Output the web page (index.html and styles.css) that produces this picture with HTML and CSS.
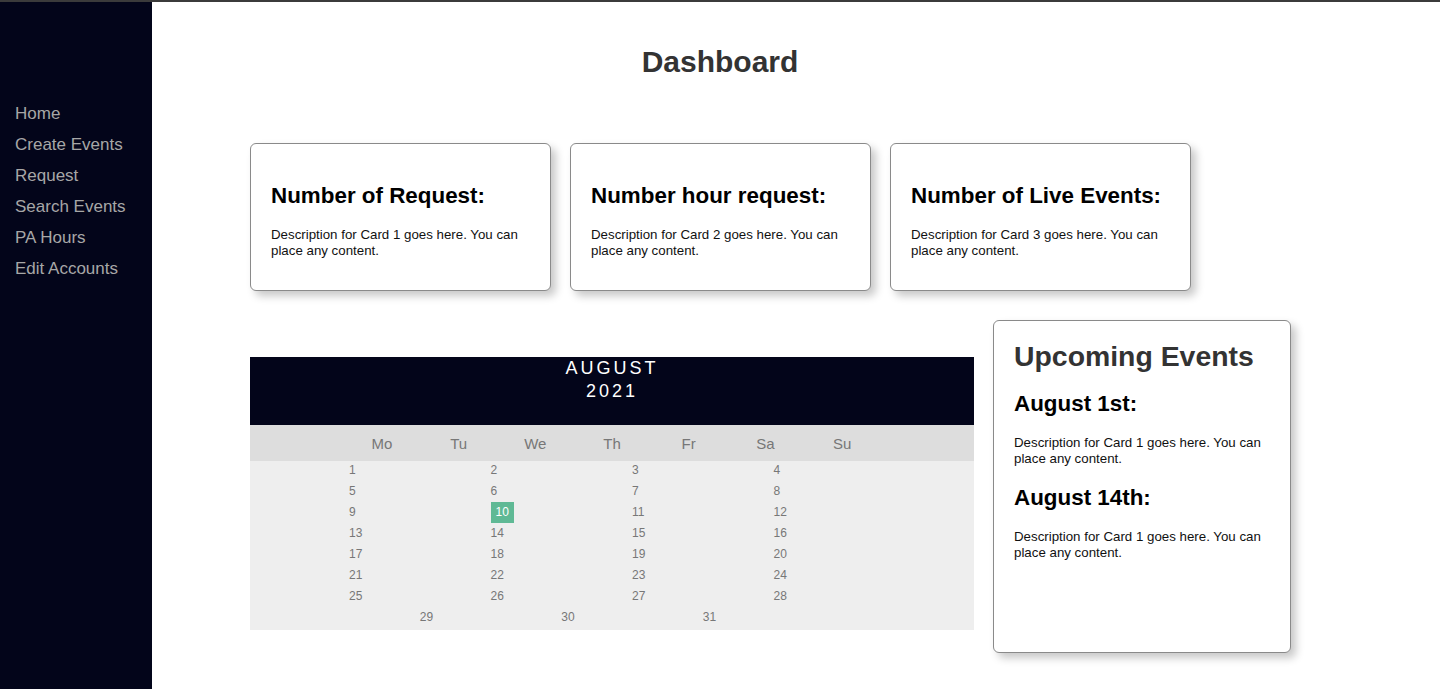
FILE: index.html
```html
<!DOCTYPE html>
<html lang="en">
<head>
<meta charset="utf-8">
<title>Dashboard</title>
<link rel="stylesheet" href="styles.css">
</head>
<body>
<div class="layout">
  <aside class="sidebar">
    <nav class="nav">
      <a class="nav-link" href="#">Home</a>
      <a class="nav-link" href="#">Create Events</a>
      <a class="nav-link" href="#">Request</a>
      <a class="nav-link" href="#">Search Events</a>
      <a class="nav-link" href="#">PA Hours</a>
      <a class="nav-link" href="#">Edit Accounts</a>
    </nav>
  </aside>
  <main class="main">
    <h1 class="page-title">Dashboard</h1>
    <section class="stats">
      <div class="card">
        <h3 class="card-title">Number of Request:</h3>
        <p class="card-text">Description for Card 1 goes here. You can place any content.</p>
      </div>
      <div class="card">
        <h3 class="card-title">Number hour request:</h3>
        <p class="card-text">Description for Card 2 goes here. You can place any content.</p>
      </div>
      <div class="card">
        <h3 class="card-title">Number of Live Events:</h3>
        <p class="card-text">Description for Card 3 goes here. You can place any content.</p>
      </div>
    </section>
    <section class="lower">
      <div class="calendar">
        <div class="month">
          <div class="month-name">August</div>
          <div class="month-year">2021</div>
        </div>
        <ul class="weekdays">
          <li>Mo</li><li>Tu</li><li>We</li><li>Th</li><li>Fr</li><li>Sa</li><li>Su</li>
        </ul>
        <ul class="days">
          <li>1</li><li>2</li><li>3</li><li>4</li>
          <li>5</li><li>6</li><li>7</li><li>8</li>
          <li>9</li><li><span class="active">10</span></li><li>11</li><li>12</li>
          <li>13</li><li>14</li><li>15</li><li>16</li>
          <li>17</li><li>18</li><li>19</li><li>20</li>
          <li>21</li><li>22</li><li>23</li><li>24</li>
          <li>25</li><li>26</li><li>27</li><li>28</li>
          <li>29</li><li>30</li><li>31</li>
        </ul>
      </div>
      <div class="upcoming">
        <h2 class="upcoming-title">Upcoming Events</h2>
        <h3 class="event-title">August 1st:</h3>
        <p class="card-text">Description for Card 1 goes here. You can place any content.</p>
        <h3 class="event-title">August 14th:</h3>
        <p class="card-text">Description for Card 1 goes here. You can place any content.</p>
      </div>
    </section>
  </main>
</div>
</body>
</html>
```

FILE: styles.css
```css
* {
  box-sizing: border-box;
}

html, body {
  margin: 0;
  padding: 0;
  background: #ffffff;
}

body {
  border-top: 2px solid #3b3b3b;
  font-family: "Liberation Sans", Arial, sans-serif;
  color: #000;
}

.layout {
  display: flex;
  min-height: calc(100vh - 2px);
}

.sidebar {
  width: 152px;
  flex: 0 0 152px;
  background: #03051a;
}

.nav {
  display: flex;
  flex-direction: column;
  padding: 96px 0 0 15px;
}

.nav-link {
  color: #a7a7a7;
  text-decoration: none;
  font-size: 17px;
  line-height: 31px;
}

.main {
  flex: 1;
  padding: 0 0 0 98px;
}

.page-title {
  margin: 42px 0 0;
  padding-right: 250px;
  text-align: center;
  font-size: 30px;
  line-height: 36px;
  font-weight: bold;
  color: #333;
}

.stats {
  display: flex;
  gap: 19px;
  margin-top: 63px;
}

.card {
  width: 301px;
  height: 148px;
  border: 1px solid #8a8a8a;
  border-radius: 6px;
  padding: 39px 20px 0;
  box-shadow: 5px 5px 9px rgba(0, 0, 0, 0.22);
  background: #fff;
}

.card-title {
  margin: 0 0 19px;
  font-size: 22.4px;
  line-height: 25px;
  font-weight: bold;
  color: #000;
}

.card-text {
  margin: 0;
  font-size: 13.3px;
  line-height: 16px;
  color: #111;
}

.lower {
  display: flex;
  align-items: flex-start;
  gap: 19px;
  margin-top: 29px;
}

.calendar {
  width: 724px;
  margin-top: 37px;
}

.month {
  height: 68px;
  background: #03051a;
  color: #fff;
  text-align: center;
  font-size: 18px;
  line-height: 23px;
  letter-spacing: 3px;
  padding-top: 0;
}

.month-name {
  text-transform: uppercase;
}

.weekdays {
  display: flex;
  justify-content: center;
  margin: 0;
  padding: 0;
  list-style: none;
  background: #dddddd;
  height: 36px;
  align-items: center;
}

.weekdays li {
  width: 76.7px;
  text-align: center;
  font-size: 15px;
  color: #777;
}

.days {
  display: flex;
  flex-wrap: wrap;
  justify-content: center;
  margin: 0;
  padding: 1px 0 0 40px;
  list-style: none;
  background: #eeeeee;
}

.days li {
  width: 141.5px;
  text-align: left;
  font-size: 12px;
  line-height: 16px;
  height: 16px;
  margin-bottom: 5px;
  color: #777;
}

.active {
  display: inline-block;
  line-height: 16px;
  padding: 2px 5px 3px;
  margin: -2px 0 -3px;
  background: #5fb995;
  color: #fff;
}

.upcoming {
  width: 298px;
  height: 333px;
  border: 1px solid #8a8a8a;
  border-radius: 6px;
  padding: 19px 20px 0;
  box-shadow: 5px 5px 9px rgba(0, 0, 0, 0.22);
  background: #fff;
}

.upcoming-title {
  margin: 0 0 19px;
  font-size: 28.4px;
  line-height: 32px;
  font-weight: bold;
  color: #333;
}

.event-title {
  margin: 0 0 19px;
  font-size: 22.4px;
  line-height: 25px;
  font-weight: bold;
  color: #000;
}

.upcoming .card-text {
  margin-bottom: 18px;
}
```
